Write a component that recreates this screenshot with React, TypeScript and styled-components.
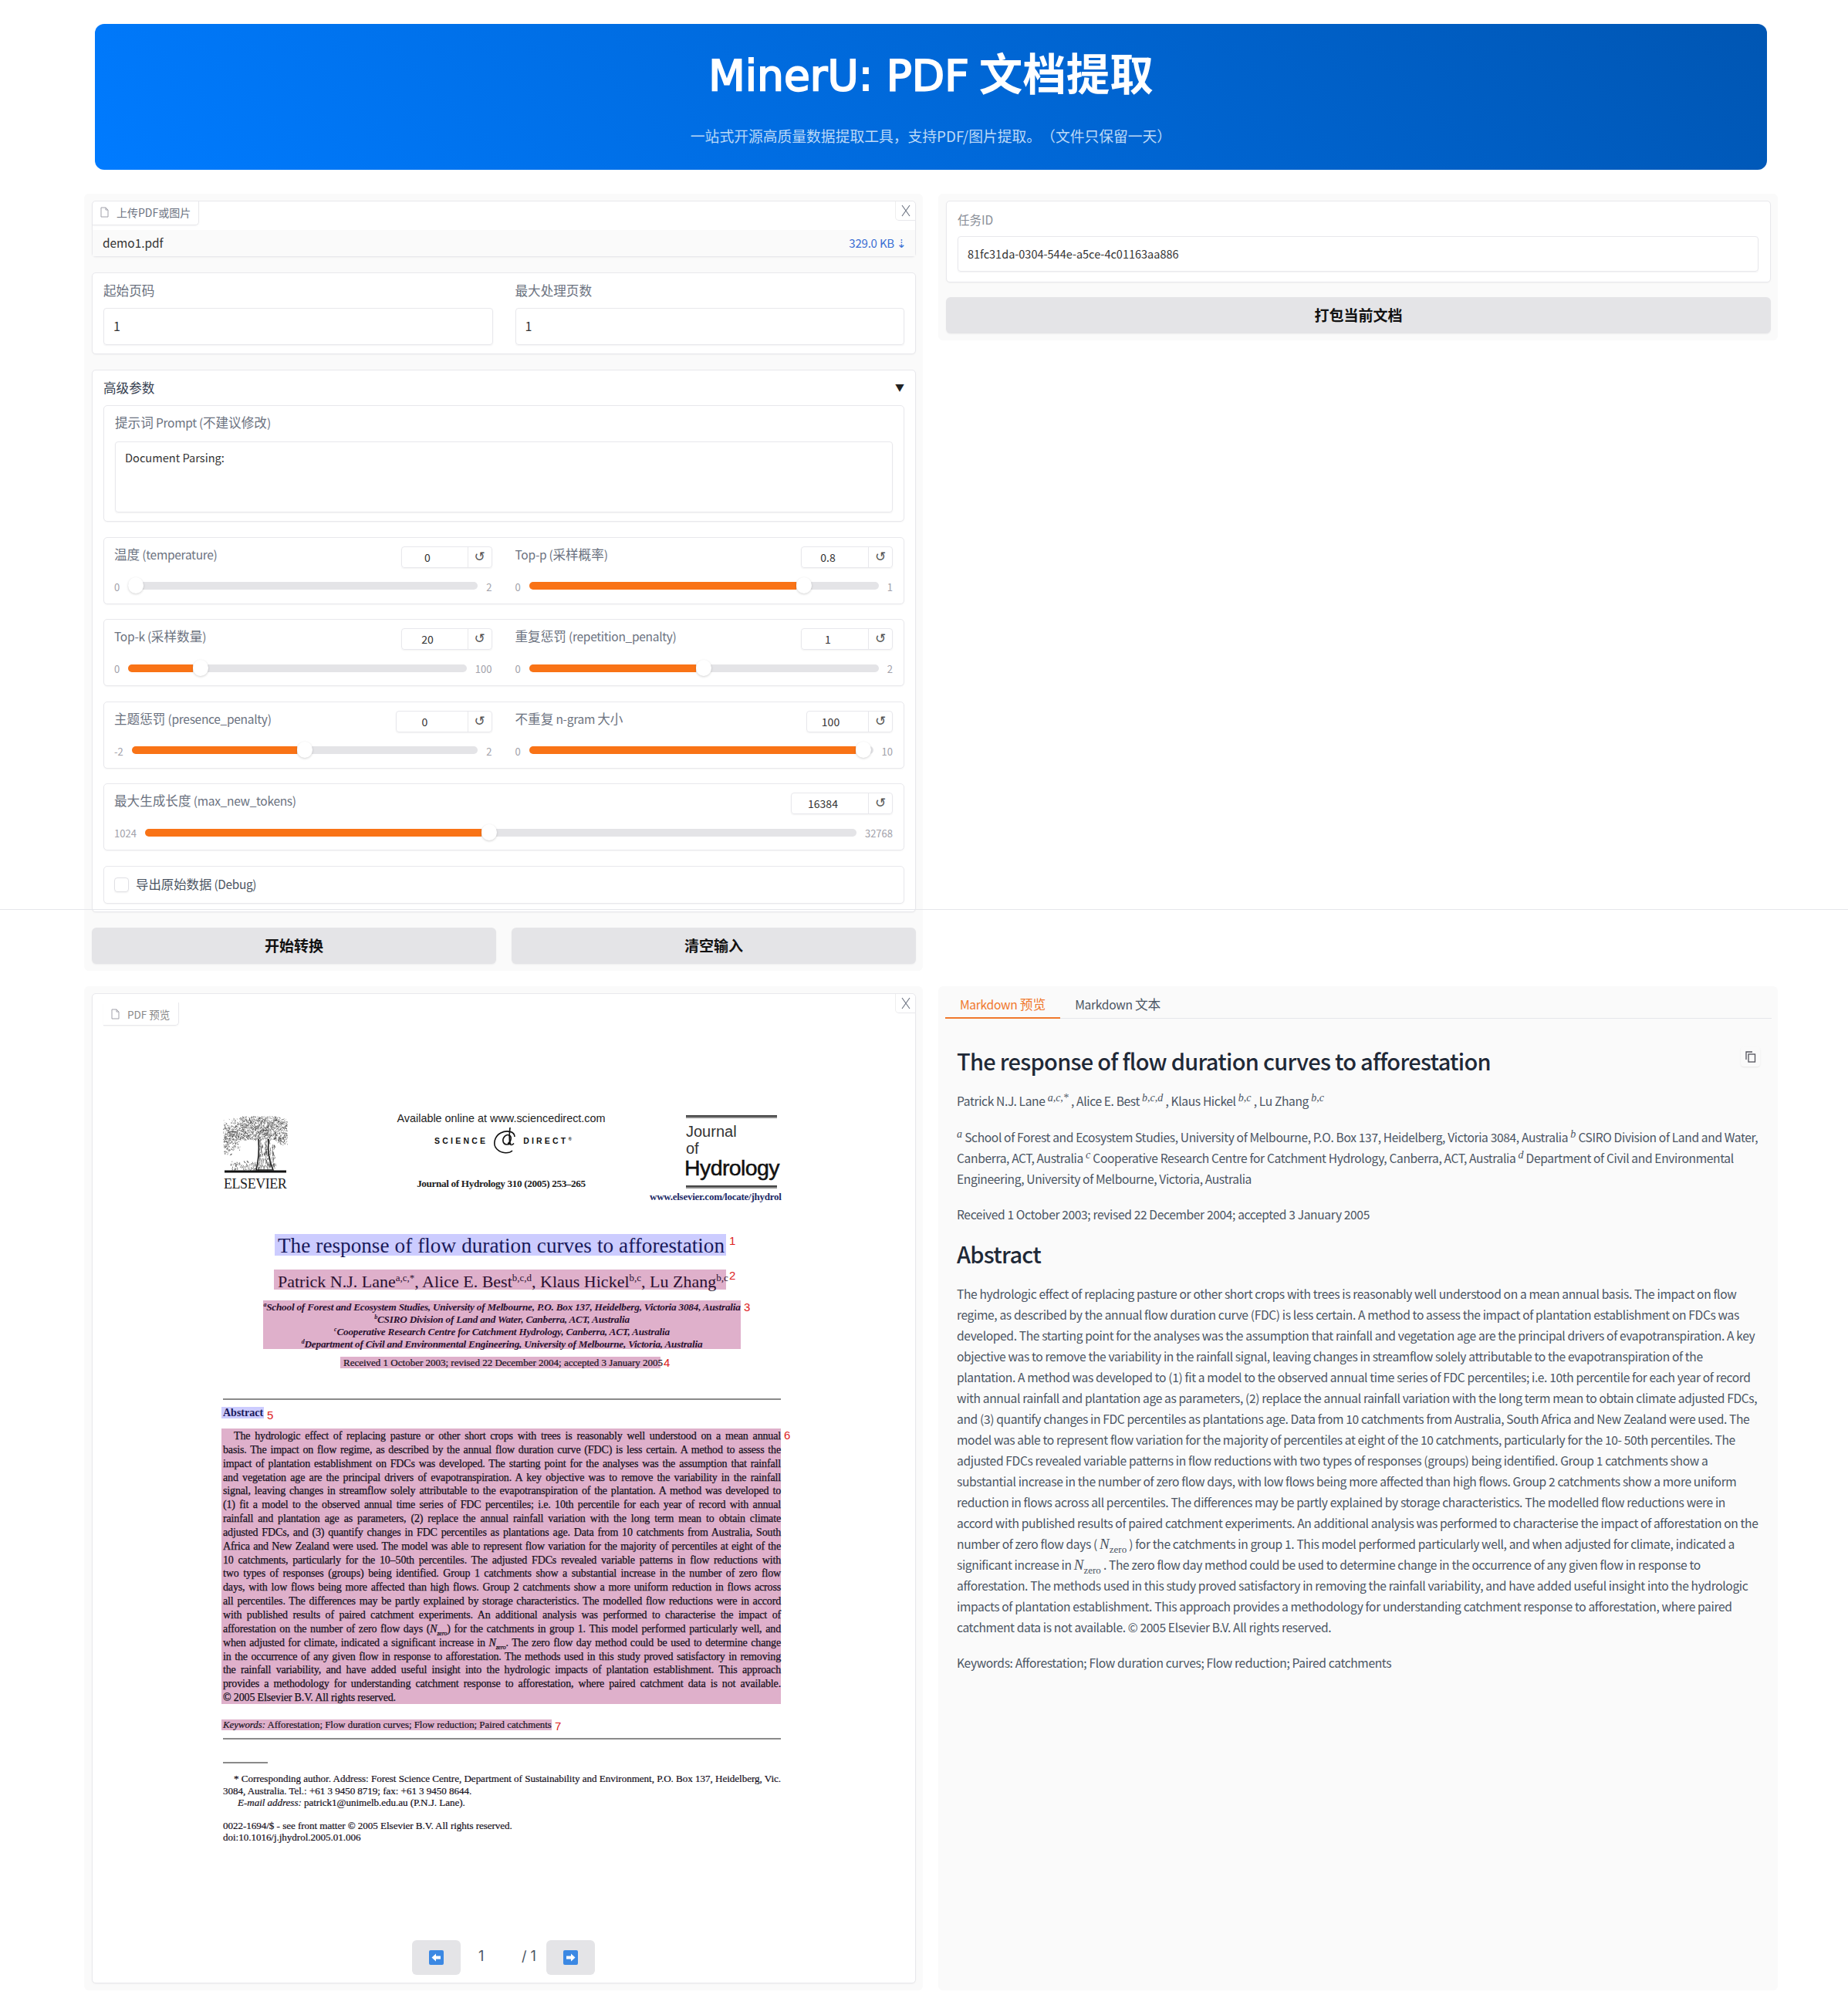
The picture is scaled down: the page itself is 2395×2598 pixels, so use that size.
import React from "react";
import styled, { createGlobalStyle } from "styled-components";

const SANS = `"Noto Sans CJK SC", "Noto Sans", sans-serif`;
const SERIF = `"Liberation Serif", "Times New Roman", serif`;

const GlobalStyle = createGlobalStyle`
    * {
        box-sizing: border-box;
    }
    html, body {
        margin: 0;
        padding: 0;
        background: #fff;
        font-family: ${SANS};
    }
`;

const sliderRows = [
    [
        {label: "温度 (temperature)", value: "0", min: "0", max: "2", pct: 0, boxWidth: 118},
        {label: "Top-p (采样概率)", value: "0.8", min: "0", max: "1", pct: 0.8, boxWidth: 119},
    ],
    [
        {label: "Top-k (采样数量)", value: "20", min: "0", max: "100", pct: 0.2, boxWidth: 118},
        {label: "重复惩罚 (repetition_penalty)", value: "1", min: "0", max: "2", pct: 0.5, boxWidth: 119},
    ],
    [
        {label: "主题惩罚 (presence_penalty)", value: "0", min: "-2", max: "2", pct: 0.5, boxWidth: 125},
        {label: "不重复 n-gram 大小", value: "100", min: "0", max: "10", pct: 0.995, boxWidth: 112},
    ],
];

const abstractLines = [
    "The hydrologic effect of replacing pasture or other short crops with trees is reasonably well understood on a mean annual",
    "basis. The impact on flow regime, as described by the annual flow duration curve (FDC) is less certain. A method to assess the",
    "impact of plantation establishment on FDCs was developed. The starting point for the analyses was the assumption that rainfall",
    "and vegetation age are the principal drivers of evapotranspiration. A key objective was to remove the variability in the rainfall",
    "signal, leaving changes in streamflow solely attributable to the evapotranspiration of the plantation. A method was developed to",
    "(1) fit a model to the observed annual time series of FDC percentiles; i.e. 10th percentile for each year of record with annual",
    "rainfall and plantation age as parameters, (2) replace the annual rainfall variation with the long term mean to obtain climate",
    "adjusted FDCs, and (3) quantify changes in FDC percentiles as plantations age. Data from 10 catchments from Australia, South",
    "Africa and New Zealand were used. The model was able to represent flow variation for the majority of percentiles at eight of the",
    "10 catchments, particularly for the 10–50th percentiles. The adjusted FDCs revealed variable patterns in flow reductions with",
    "two types of responses (groups) being identified. Group 1 catchments show a substantial increase in the number of zero flow",
    "days, with low flows being more affected than high flows. Group 2 catchments show a more uniform reduction in flows across",
    "all percentiles. The differences may be partly explained by storage characteristics. The modelled flow reductions were in accord",
    "with published results of paired catchment experiments. An additional analysis was performed to characterise the impact of",
];

const abstractLinesEnd = [
    "in the occurrence of any given flow in response to afforestation. The methods used in this study proved satisfactory in removing",
    "the rainfall variability, and have added useful insight into the hydrologic impacts of plantation establishment. This approach",
    "provides a methodology for understanding catchment response to afforestation, where paired catchment data is not available.",
];

// deterministic scribble for the engraved tree of the publisher logo
const treePath = () => {
    let seed = 7;
    const rnd = () => {
        seed = (seed * 16807) % 2147483647;
        return seed / 2147483647;
    };
    let d = "";
    for (let i = 0; i < 1500; i++) {
        const x = 1 + rnd() * 82;
        const y = 1 + rnd() * 30 + (Math.abs(x - 42) > 30 ? rnd() * 8 : 0) + (x < 22 ? rnd() * 14 : 0);
        d += `M${x.toFixed(1)} ${y.toFixed(1)}l${(rnd() * 4 - 2).toFixed(1)} ${(rnd() * 3 - 1).toFixed(1)}`;
    }
    for (let i = 0; i < 160; i++) {
        const x = 46 + rnd() * 22;
        const y = 30 + rnd() * 38;
        d += `M${x.toFixed(1)} ${y.toFixed(1)}l${(rnd() * 2 - 1).toFixed(1)} ${(rnd() * 6).toFixed(1)}`;
    }
    for (let i = 0; i < 90; i++) {
        const x = 10 + rnd() * 34;
        const y = 58 + rnd() * 12;
        d += `M${x.toFixed(1)} ${y.toFixed(1)}l${(rnd() * 3 - 1.5).toFixed(1)} ${(rnd() * 3).toFixed(1)}`;
    }
    return d;
};

// Latin runs of a mixed label sit a little smaller and tighter than the CJK ones
const Mixed = ({text}: { text: string }) => (
    <>
        {text.split(/([\x20-\x7e]+)/).map((run, i) =>
            /[\x20-\x7e]/.test(run) ? <LatinRun key={i}>{run}</LatinRun> : run
        )}
    </>
);

const FileIcon = () => (
    <svg width="11" height="14" viewBox="0 0 11 14" fill="none" stroke="#a1a1aa" strokeWidth="1">
        <path d="M1 1h6l3 3v9H1z"/>
        <path d="M7 1v3h3"/>
    </svg>
);

const CloseIcon = () => (
    <svg width="12" height="16" viewBox="0 0 12 16" fill="none" stroke="#6b7280" strokeWidth="1.1">
        <path d="M1 1l10 14M11 1L1 15"/>
    </svg>
);

const CopyIcon = () => (
    <svg width="14" height="15" viewBox="0 0 14 15" fill="none" stroke="#52525b" strokeWidth="1.3">
        <path d="M1 11V1h8"/>
        <rect x="4" y="4" width="8.5" height="10"/>
    </svg>
);

const ArrowIcon = ({dir}: { dir: "left" | "right" }) => (
    <svg width="19" height="19" viewBox="0 0 19 19">
        <rect width="19" height="19" rx="2" fill="#3b88e3"/>
        <path
            d={dir === "left" ? "M3.5 9.5L9 4.5v3h6v4H9v3z" : "M15.5 9.5L10 4.5v3H4v4h6v3z"}
            fill="#fff"
        />
    </svg>
);

const SdMark = () => (
    <SdMarkSvg width="34" height="35" viewBox="0 0 34 35" fill="none" stroke="#111" strokeWidth="1.6">
        <path d="M25 20c-2 3-9 3-10-2s4-10 8-8 2 9-2 11"/>
        <path d="M24 0c-1 8-1 16 0 21 .5 2 3 2 5-.5"/>
        <path d="M30 12C30 5 20 3 12 7S1 22 7 28s16 6 20 2"/>
    </SdMarkSvg>
);

const Slider = ({min, max, pct}: { min: string; max: string; pct: number }) => (
    <SliderLine>
        <RangeLabel>{min}</RangeLabel>
        <Track>
            <Fill style={{width: `calc(${pct} * (100% - 20px))`}}/>
            <Thumb style={{left: `calc(${pct} * (100% - 20px))`}}/>
        </Track>
        <RangeLabel>{max}</RangeLabel>
    </SliderLine>
);

const NumberField = ({value, width}: { value: string; width: number }) => (
    <NumberBox style={{width}}>
        <NumberValue>{value}</NumberValue>
        <ResetButton>↺</ResetButton>
    </NumberBox>
);

const Nzero = () => (
    <MathVar>N<sub>zero</sub></MathVar>
);

export default function App() {
    return (
        <Page>
            <GlobalStyle/>
            <PageSeam/>
            <Header>
                <Title><TitleLatin>MinerU: PDF</TitleLatin> 文档提取</Title>
                <Subtitle>一站式开源高质量数据提取工具，支持PDF/图片提取。（文件只保留一天）</Subtitle>
            </Header>

            <Row>
                <Panel>
                    <UploadBlock>
                        <BlockTab><FileIcon/>上传PDF或图片</BlockTab>
                        <CloseButton><CloseIcon/></CloseButton>
                        <FileRow>
                            <span>demo1.pdf</span>
                            <FileSize>329.0 KB ⇣</FileSize>
                        </FileRow>
                    </UploadBlock>

                    <PagesBlock>
                        <div>
                            <FieldLabel>起始页码</FieldLabel>
                            <TextField>1</TextField>
                        </div>
                        <div>
                            <FieldLabel>最大处理页数</FieldLabel>
                            <TextField>1</TextField>
                        </div>
                    </PagesBlock>

                    <Accordion>
                        <AccordionHead>
                            <span>高级参数</span>
                            <Caret>▼</Caret>
                        </AccordionHead>
                        <AccordionBody>
                            <PromptBlock>
                                <FieldLabel><Mixed text="提示词 Prompt (不建议修改)"/></FieldLabel>
                                <PromptArea>Document Parsing:</PromptArea>
                            </PromptBlock>

                            {sliderRows.map((row) => (
                                <SliderBlock key={row[0].label}>
                                    {row.map((s) => (
                                        <div key={s.label}>
                                            <SliderHead>
                                                <FieldLabel><Mixed text={s.label}/></FieldLabel>
                                                <NumberField value={s.value} width={s.boxWidth}/>
                                            </SliderHead>
                                            <Slider min={s.min} max={s.max} pct={s.pct}/>
                                        </div>
                                    ))}
                                </SliderBlock>
                            ))}

                            <WideSliderBlock>
                                <SliderHead>
                                    <FieldLabel><Mixed text="最大生成长度 (max_new_tokens)"/></FieldLabel>
                                    <NumberField value="16384" width={132}/>
                                </SliderHead>
                                <Slider min="1024" max="32768" pct={0.484}/>
                            </WideSliderBlock>

                            <CheckBlock>
                                <CheckBox/>
                                <CheckLabel><Mixed text="导出原始数据 (Debug)"/></CheckLabel>
                            </CheckBlock>
                        </AccordionBody>
                    </Accordion>

                    <ButtonRow>
                        <GrayButton>开始转换</GrayButton>
                        <GrayButton>清空输入</GrayButton>
                    </ButtonRow>
                </Panel>

                <Panel>
                    <TaskBlock>
                        <TaskLabel>任务ID</TaskLabel>
                        <TaskField>81fc31da-0304-544e-a5ce-4c01163aa886</TaskField>
                    </TaskBlock>
                    <GrayButton>打包当前文档</GrayButton>
                </Panel>
            </Row>

            <LowerRow>
                <Panel>
                    <PdfBlock>
                        <PdfTab><FileIcon/>PDF 预览</PdfTab>
                        <CloseButton><CloseIcon/></CloseButton>

                        <PdfPage>
                            <PdfHeader>
                                <PublisherLogo>
                                    <svg width="84" height="75" viewBox="0 0 84 75" fill="none">
                                        <path d={treePath()} stroke="#333" strokeWidth=".8" opacity=".7"/>
                                        <path d="M46 30c1 14 0 28-3 40h22c-5-10-7-26-6-40" stroke="#222" strokeWidth="1.6"/>
                                        <path d="M2 72h80" stroke="#111" strokeWidth="3"/>
                                    </svg>
                                    <PublisherName>ELSEVIER</PublisherName>
                                </PublisherLogo>
                                <SourceColumn>
                                    <AvailableLine>Available online at www.sciencedirect.com</AvailableLine>
                                    <SdLogo>SCIENCE<SdMark/>DIRECT<small>®</small></SdLogo>
                                    <JournalRef>Journal of Hydrology 310 (2005) 253–265</JournalRef>
                                </SourceColumn>
                                <JournalColumn>
                                    <JournalRule/>
                                    <JournalWord $top={6}>Journal</JournalWord>
                                    <JournalWord $top={0}>of</JournalWord>
                                    <JournalName>Hydrology</JournalName>
                                    <JournalRule $lower/>
                                    <JournalUrl>www.elsevier.com/locate/jhydrol</JournalUrl>
                                </JournalColumn>
                            </PdfHeader>

                            <PaperTitle>
                                <JustLine>The response of flow duration curves to afforestation</JustLine>
                                <BlockIndex $top={0}>1</BlockIndex>
                            </PaperTitle>
                            <PaperAuthors>
                                <JustLine>Patrick N.J. Lane<sup>a,c,*</sup>, Alice E. Best<sup>b,c,d</sup>, Klaus Hickel<sup>b,c</sup>, Lu Zhang<sup>b,c</sup></JustLine>
                                <BlockIndex $top={-1}>2</BlockIndex>
                            </PaperAuthors>
                            <PaperAffiliations>
                                <div><sup>a</sup>School of Forest and Ecosystem Studies, University of Melbourne, P.O. Box 137, Heidelberg, Victoria 3084, Australia</div>
                                <div><sup>b</sup>CSIRO Division of Land and Water, Canberra, ACT, Australia</div>
                                <div><sup>c</sup>Cooperative Research Centre for Catchment Hydrology, Canberra, ACT, Australia</div>
                                <div><sup>d</sup>Department of Civil and Environmental Engineering, University of Melbourne, Victoria, Australia</div>
                                <BlockIndex $top={0}>3</BlockIndex>
                            </PaperAffiliations>
                            <PaperReceived>
                                <JustLine>Received 1 October 2003; revised 22 December 2004; accepted 3 January 2005</JustLine>
                                <BlockIndex $top={-1}>4</BlockIndex>
                            </PaperReceived>

                            <PaperRule $marginTop={39}/>
                            <AbstractHead>Abstract<BlockIndex $top={2}>5</BlockIndex></AbstractHead>
                            <AbstractBody>
                                <BlockIndex $top={0}>6</BlockIndex>
                                {abstractLines.map((line, i) => (
                                    <AbstractLine key={line} $indent={i === 0}>{line}</AbstractLine>
                                ))}
                                <AbstractLine>afforestation on the number of zero flow days (<i>N<PdfSub>zero</PdfSub></i>) for the catchments in group 1. This model performed particularly well, and</AbstractLine>
                                <AbstractLine>when adjusted for climate, indicated a significant increase in <i>N<PdfSub>zero</PdfSub></i>. The zero flow day method could be used to determine change</AbstractLine>
                                {abstractLinesEnd.map((line) => (
                                    <AbstractLine key={line}>{line}</AbstractLine>
                                ))}
                                <AbstractLast>© 2005 Elsevier B.V. All rights reserved.</AbstractLast>
                            </AbstractBody>
                            <KeywordsLine>
                                <JustLine><i>Keywords:</i> Afforestation; Flow duration curves; Flow reduction; Paired catchments</JustLine>
                                <BlockIndex $top={0}>7</BlockIndex>
                            </KeywordsLine>
                            <PaperRule $marginTop={10}/>
                            <ShortRule/>
                            <Footnotes>
                                <AbstractLine $indent>* Corresponding author. Address: Forest Science Centre, Department of Sustainability and Environment, P.O. Box 137, Heidelberg, Vic.</AbstractLine>
                                <div>3084, Australia. Tel.: +61 3 9450 8719; fax: +61 3 9450 8644.</div>
                                <FootIndent><i>E-mail address:</i> patrick1@unimelb.edu.au (P.N.J. Lane).</FootIndent>
                            </Footnotes>
                            <Footnotes $marginTop={14}>
                                <div>0022-1694/$ - see front matter © 2005 Elsevier B.V. All rights reserved.</div>
                                <div>doi:10.1016/j.jhydrol.2005.01.006</div>
                            </Footnotes>
                        </PdfPage>

                        <PagerRow>
                            <PagerButton><ArrowIcon dir="left"/></PagerButton>
                            <PagerCurrent>1</PagerCurrent>
                            <PagerTotal>/ 1</PagerTotal>
                            <PagerButton><ArrowIcon dir="right"/></PagerButton>
                        </PagerRow>
                    </PdfBlock>
                </Panel>

                <MarkdownPanel>
                    <TabBar>
                        <TabItem $active><Mixed text="Markdown 预览"/></TabItem>
                        <TabItem><Mixed text="Markdown 文本"/></TabItem>
                    </TabBar>
                    <Prose>
                        <CopyButton><CopyIcon/></CopyButton>
                        <H1>The response of flow duration curves to afforestation</H1>
                        <P>Patrick N.J. Lane <MathSup>a,c,*</MathSup> , Alice E. Best <MathSup>b,c,d</MathSup> , Klaus Hickel <MathSup>b,c</MathSup> , Lu Zhang <MathSup>b,c</MathSup></P>
                        <AffiliationP><MathSup>a</MathSup> School of Forest and Ecosystem Studies, University of Melbourne, P.O. Box 137, Heidelberg, Victoria 3084, Australia <MathSup>b</MathSup> CSIRO Division of Land and Water, Canberra, ACT, Australia <MathSup>c</MathSup> Cooperative Research Centre for Catchment Hydrology, Canberra, ACT, Australia <MathSup>d</MathSup> Department of Civil and Environmental Engineering, University of Melbourne, Victoria, Australia</AffiliationP>
                        <P>Received 1 October 2003; revised 22 December 2004; accepted 3 January 2005</P>
                        <H2>Abstract</H2>
                        <P>The hydrologic effect of replacing pasture or other short crops with trees is reasonably well understood on a mean annual basis. The impact on flow regime, as described by the annual flow duration curve (FDC) is less certain. A method to assess the impact of plantation establishment on FDCs was developed. The starting point for the analyses was the assumption that rainfall and vegetation age are the principal drivers of evapotranspiration. A key objective was to remove the variability in the rainfall signal, leaving changes in streamflow solely attributable to the evapotranspiration of the plantation. A method was developed to (1) fit a model to the observed annual time series of FDC percentiles; i.e. 10th percentile for each year of record with annual rainfall and plantation age as parameters, (2) replace the annual rainfall variation with the long term mean to obtain climate adjusted FDCs, and (3) quantify changes in FDC percentiles as plantations age. Data from 10 catchments from Australia, South Africa and New Zealand were used. The model was able to represent flow variation for the majority of percentiles at eight of the 10 catchments, particularly for the 10- 50th percentiles. The adjusted FDCs revealed variable patterns in flow reductions with two types of responses (groups) being identified. Group 1 catchments show a substantial increase in the number of zero flow days, with low flows being more affected than high flows. Group 2 catchments show a more uniform reduction in flows across all percentiles. The differences may be partly explained by storage characteristics. The modelled flow reductions were in accord with published results of paired catchment experiments. An additional analysis was performed to characterise the impact of afforestation on the number of zero flow days ( <Nzero/> ) for the catchments in group 1. This model performed particularly well, and when adjusted for climate, indicated a significant increase in <Nzero/> . The zero flow day method could be used to determine change in the occurrence of any given flow in response to afforestation. The methods used in this study proved satisfactory in removing the rainfall variability, and have added useful insight into the hydrologic impacts of plantation establishment. This approach provides a methodology for understanding catchment response to afforestation, where paired catchment data is not available. © 2005 Elsevier B.V. All rights reserved.</P>
                        <P>Keywords: Afforestation; Flow duration curves; Flow reduction; Paired catchments</P>
                    </Prose>
                </MarkdownPanel>
            </LowerRow>
        </Page>
    );
}

const Page = styled.div`
    position: relative;
    width: 2395px;
    height: 2598px;
    padding: 31px 91px 19px 109px;
    overflow: hidden;
`;

const PageSeam = styled.div`
    position: absolute;
    top: 1178px;
    left: 0;
    right: 0;
    height: 1px;
    background: #e5e7eb;
    z-index: 2;
`;

const Header = styled.header`
    height: 189px;
    margin: 0 14px 31px;
    padding-top: 25px;
    border-radius: 12px;
    background: linear-gradient(45deg, #007bff, #0056b3);
    text-align: center;
    color: #fff;
`;

const Title = styled.h1`
    margin: 0;
    font-size: 56.5px;
    line-height: 72px;
    font-weight: 700;
    font-family: ${SANS};
`;

const TitleLatin = styled.span`
    font-family: "DejaVu Sans", sans-serif;
    font-size: 55px;
    font-weight: 400;
    -webkit-text-stroke: 2px #fff;
`;

const Subtitle = styled.p`
    margin: 28px 0 0;
    font-size: 18.8px;
    line-height: 28px;
    color: #bcd9f7;
    text-spacing-trim: space-all;
`;

const LatinRun = styled.span`
    font-size: 0.935em;
    letter-spacing: -0.3px;
`;

const Row = styled.div`
    display: grid;
    grid-template-columns: 1087px 1088px;
    gap: 20px;
    align-items: start;
`;

const LowerRow = styled(Row)`
    margin-top: 20px;
    height: 1301px;
    align-items: stretch;
`;

const Panel = styled.section`
    display: flex;
    flex-direction: column;
    gap: 20px;
    padding: 9px 9px 9px 10px;
    background: #fafafa;
    border-radius: 6px;
`;

const Block = styled.div`
    position: relative;
    background: #fff;
    border: 1px solid #e8e8ec;
    border-radius: 5px;
    box-shadow: 0 1px 2px rgba(0, 0, 0, .04);
`;

const UploadBlock = styled(Block)`
    height: 73px;
    padding-top: 37px;
`;

const BlockTab = styled.div`
    position: absolute;
    top: 0;
    left: 0;
    height: 31px;
    display: flex;
    align-items: center;
    gap: 10px;
    padding: 0 10px 2px;
    font-size: 14px;
    color: #6b7280;
    border-right: 1px solid #e8e8ec;
    border-bottom: 1px solid #e8e8ec;
    border-radius: 5px 0 5px 0;
    box-shadow: 0 1px 2px rgba(0, 0, 0, .04);
`;

const PdfTab = styled(BlockTab)`
    top: 11px;
    left: 14px;
    height: 30px;
    width: 98px;
    padding: 0 0 0 10px;
    color: #888;
    font-size: 13.5px;
    border-radius: 0 0 5px 0;
`;

const CloseButton = styled.div`
    position: absolute;
    top: 0;
    right: 0;
    width: 26px;
    height: 25px;
    display: flex;
    align-items: center;
    justify-content: center;
    border-left: 1px solid #eee;
    border-bottom: 1px solid #e8e8ec;
    border-radius: 0 5px 0 5px;
    background: #fff;
`;

const FileRow = styled.div`
    display: flex;
    justify-content: space-between;
    align-items: center;
    height: 34px;
    padding: 0 11px 2px 13px;
    background: #fafafa;
    font-size: 15.4px;
    color: #333;
`;

const FileSize = styled.span`
    font-size: 15px;
    letter-spacing: -.2px;
    color: #3b6fd4;
`;

const PagesBlock = styled(Block)`
    height: 106px;
    padding: 10px 14px 0 14px;
    display: grid;
    grid-template-columns: 1fr 1fr;
    gap: 29px;
`;

const FieldLabel = styled.div`
    font-size: 16.6px;
    line-height: 24px;
    color: #6b7280;
`;

const TextField = styled.div`
    height: 48px;
    margin-top: 11px;
    padding-left: 12px;
    border: 1px solid #e8e8ec;
    border-radius: 4px;
    box-shadow: 0 1px 2px rgba(0, 0, 0, .05);
    font-size: 16px;
    line-height: 44px;
    color: #333;
`;

const Accordion = styled(Block)`
    height: 703px;
    padding: 0 14px;
`;

const AccordionHead = styled.div`
    display: flex;
    justify-content: space-between;
    align-items: center;
    height: 45px;
    font-size: 16.6px;
    color: #374151;
    padding-bottom: 2px;
`;

const Caret = styled.span`
    font-size: 12px;
    color: #222;
`;

const AccordionBody = styled.div`
    display: flex;
    flex-direction: column;
    gap: 19.5px;
`;

const PromptBlock = styled(Block)`
    height: 151px;
    padding: 9px 14px 0;
`;

const PromptArea = styled.div`
    height: 92px;
    margin-top: 13px;
    padding: 8px 12px;
    border: 1px solid #e8e8ec;
    border-radius: 4px;
    box-shadow: 0 1px 2px rgba(0, 0, 0, .05);
    font-size: 14.6px;
    line-height: 24px;
    color: #333;
`;

const SliderBlock = styled(Block)`
    height: 87px;
    padding: 11px 14px 0 13px;
    display: grid;
    grid-template-columns: 1fr 1fr;
    gap: 30px;
`;

const WideSliderBlock = styled(Block)`
    height: 87px;
    padding: 11px 14px 0 13px;
`;

const SliderHead = styled.div`
    display: flex;
    justify-content: space-between;
    align-items: flex-start;

    ${FieldLabel} {
        margin-top: -2px;
    }
`;

const NumberBox = styled.div`
    display: flex;
    height: 28px;
    border: 1px solid #e8e8ec;
    border-radius: 4px;
    box-shadow: 0 1px 2px rgba(0, 0, 0, .05);
    font-size: 14px;
    color: #333;
`;

const NumberValue = styled.span`
    flex: 1;
    text-align: center;
    padding-right: 18px;
    line-height: 26px;
`;

const ResetButton = styled.span`
    width: 31px;
    flex: none;
    text-align: center;
    border-left: 1px solid #e8e8ec;
    line-height: 25px;
    color: #555;
    font-family: "DejaVu Sans", sans-serif;
    font-size: 17px;
`;

const SliderLine = styled.div`
    display: flex;
    align-items: center;
    gap: 11px;
    height: 21px;
    margin-top: 13px;
`;

const RangeLabel = styled.span`
    font-size: 13px;
    line-height: 16px;
    color: #a1a1aa;
    padding-top: 3px;
`;

const Track = styled.div`
    position: relative;
    flex: 1;
    height: 10px;
    background: #e4e4e7;
    border-radius: 5px;
`;

const Fill = styled.div`
    height: 10px;
    background: #f97316;
    border-radius: 5px 0 0 5px;
`;

const Thumb = styled.div`
    position: absolute;
    top: -6px;
    width: 20px;
    height: 21px;
    border-radius: 50%;
    background: #fff;
    box-shadow: 0 1px 3px rgba(0, 0, 0, .18);
`;

const CheckBlock = styled(Block)`
    height: 49px;
    padding: 0 13px;
    display: flex;
    align-items: center;
    gap: 9px;
`;

const CheckBox = styled.span`
    width: 19px;
    height: 19px;
    border: 1px solid #e0e0e4;
    border-radius: 4px;
    box-shadow: 0 1px 2px rgba(0, 0, 0, .05);
`;

const CheckLabel = styled.span`
    font-size: 16.4px;
    color: #4b5563;
    padding-bottom: 2px;
`;

const ButtonRow = styled.div`
    display: grid;
    grid-template-columns: 1fr 1fr;
    gap: 20px;
`;

const GrayButton = styled.div`
    height: 47px;
    border-radius: 6px;
    background: #e4e4e7;
    box-shadow: 0 1px 2px rgba(0, 0, 0, .05);
    text-align: center;
    font-size: 19px;
    font-weight: 700;
    line-height: 45px;
    color: #111;
`;

const TaskBlock = styled(Block)`
    height: 106px;
    margin-bottom: -1px;
    padding: 11px 15px 0 14px;
`;

const TaskLabel = styled.div`
    font-size: 15.5px;
    line-height: 24px;
    color: #8a8f98;
`;

const TaskField = styled.div`
    height: 46px;
    margin-top: 10px;
    padding-left: 12px;
    border: 1px solid #e8e8ec;
    border-radius: 4px;
    box-shadow: 0 1px 2px rgba(0, 0, 0, .05);
    font-size: 14.5px;
    line-height: 43px;
    color: #333;
`;

const PdfBlock = styled(Block)`
    flex: 1;
    display: flex;
    flex-direction: column;
    padding: 151px 0 10px;
`;

const PdfPage = styled.div`
    margin-left: 167px;
    width: 725px;
    font-family: ${SERIF};
    color: #16101c;
`;

const PdfHeader = styled.div`
    display: grid;
    grid-template-columns: 86px 1fr 170px;
    height: 120px;
    padding-left: 2px;
`;

const PublisherLogo = styled.div`
    padding-top: 7px;
`;

const PublisherName = styled.div`
    margin-top: -1px;
    line-height: 20px;
    font-size: 18px;
    letter-spacing: -.45px;
    white-space: nowrap;
    padding-left: 1px;
    color: #222;
`;

const SourceColumn = styled.div`
    padding-left: 82px;
    text-align: center;
`;

const AvailableLine = styled.div`
    font-family: "Liberation Sans", sans-serif;
    font-size: 14.4px;
    line-height: 20px;
    white-space: nowrap;
    color: #222;
`;

const SdLogo = styled.div`
    display: flex;
    align-items: center;
    justify-content: center;
    height: 34px;
    margin-top: 2px;
    padding-left: 5px;
    font-family: "Liberation Sans", sans-serif;
    font-size: 10.5px;
    font-weight: 700;
    letter-spacing: 3.2px;
    color: #111;

    small {
        font-size: 6px;
        letter-spacing: 0;
        margin-bottom: 4px;
    }
`;

const SdMarkSvg = styled.svg`
    flex: none;
    margin: 0 7px 0 5px;
`;

const JournalRef = styled.div`
    margin-top: 30px;
    font-size: 13.2px;
    line-height: 18px;
    font-weight: 700;
    letter-spacing: -.35px;
    white-space: nowrap;
    color: #222;
`;

const JournalColumn = styled.div`
    padding-top: 6px;
`;

const JournalRule = styled.div<{ $lower?: boolean }>`
    width: 118px;
    height: 4px;
    margin-left: 47px;
    margin-top: ${(p) => (p.$lower ? "9px" : "0")};
    background: #8a8a8a;
    border-top: 2px solid #444;
`;

const JournalWord = styled.div<{ $top: number }>`
    margin-left: 47px;
    margin-top: ${(p) => p.$top}px;
    font-family: "Liberation Sans", sans-serif;
    font-size: 20px;
    line-height: 22px;
    color: #333;
`;

const JournalName = styled.div`
    margin-left: 45px;
    font-family: "Liberation Sans", sans-serif;
    font-size: 28.5px;
    line-height: 28px;
    letter-spacing: -.6px;
    -webkit-text-stroke: .5px #111;
    color: #111;
`;

const JournalUrl = styled.div`
    margin-top: 3px;
    font-size: 13px;
    line-height: 16px;
    font-weight: 700;
    letter-spacing: -.25px;
    color: #1c2a66;
    white-space: nowrap;
`;

const Highlight = styled.div`
    position: relative;
`;

const JustLine = styled.div`
    text-align: justify;
    text-align-last: justify;
    white-space: nowrap;
`;

const BlockIndex = styled.span<{ $top: number }>`
    position: absolute;
    left: calc(100% + 4px);
    top: ${(p) => p.$top}px;
    font-family: "Liberation Sans", sans-serif;
    font-size: 15px;
    font-style: normal;
    font-weight: 400;
    line-height: 18px;
    letter-spacing: 0;
    color: #dd1c1c;
    -webkit-text-stroke: 0;
`;

const PaperTitle = styled(Highlight)`
    width: 585px;
    height: 28px;
    margin: 40px 0 0 69px;
    background: #ccccff;
    font-size: 27.2px;
    line-height: 31px;
    padding: 0 2px 0 4px;
    color: #1a1a5a;
`;

const PaperAuthors = styled(Highlight)`
    width: 586px;
    height: 26px;
    margin: 18px 0 0 68px;
    background: #dfb0cb;
    font-size: 22px;
    line-height: 31px;
    padding: 0 6px 0 5px;
    color: #2a1030;

    sup {
        font-size: 13px;
        line-height: 0;
    }
`;

const PaperAffiliations = styled(Highlight)`
    width: 619px;
    height: 63px;
    margin: 14px 0 0 54px;
    padding-top: 1px;
    background: #dfb0cb;
    font-size: 13.2px;
    font-style: italic;
    font-weight: 700;
    letter-spacing: -.2px;
    line-height: 16px;
    text-align: center;
    white-space: nowrap;
    color: #2a1030;

    sup {
        font-size: 8px;
        line-height: 0;
    }
`;

const PaperReceived = styled(Highlight)`
    width: 415px;
    height: 15px;
    margin: 10px 0 0 154px;
    background: #dfb0cb;
    font-size: 13px;
    line-height: 15px;
    padding: 0 1px 0 4px;
    -webkit-text-stroke: .2px #16101c;
`;

const PaperRule = styled.div<{ $marginTop: number }>`
    height: 2px;
    margin-top: ${(p) => p.$marginTop}px;
    margin-left: 2px;
    background: #8a8a8a;
`;

const AbstractHead = styled.div`
    position: relative;
    width: 55px;
    height: 15px;
    margin-top: 9px;
    background: #ccccff;
    font-size: 14px;
    font-weight: 700;
    line-height: 16px;
    padding-left: 2px;
    white-space: nowrap;
    color: #1a1a5a;
`;

const AbstractBody = styled.div`
    position: relative;
    height: 357px;
    margin-top: 13px;
    background: #dfb0cb;
    padding: 1px 0 0 2px;
    font-size: 14px;
    letter-spacing: -.15px;
    line-height: 17.85px;
    -webkit-text-stroke: .25px #16101c;
`;

const AbstractLine = styled.div<{ $indent?: boolean }>`
    text-align: justify;
    text-align-last: justify;
    white-space: nowrap;
    padding-left: ${(p) => (p.$indent ? "14px" : "0")};
`;

const AbstractLast = styled.div`
    white-space: nowrap;
`;

const PdfSub = styled.sub`
    font-size: 8px;
    line-height: 0;
`;

const KeywordsLine = styled(Highlight)`
    width: 428px;
    height: 14px;
    margin: 20px 0 0;
    background: #dfb0cb;
    font-size: 12.8px;
    line-height: 15px;
    padding-left: 2px;
    -webkit-text-stroke: .2px #16101c;

    ${JustLine} {
        text-align-last: left;
    }
`;

const ShortRule = styled.div`
    width: 58px;
    height: 2px;
    margin: 29px 0 0 2px;
    background: #8a8a8a;
`;

const Footnotes = styled.div<{ $marginTop?: number }>`
    margin-top: ${(p) => p.$marginTop ?? 12}px;
    padding-left: 2px;
    font-size: 13.1px;
    line-height: 15.5px;
    letter-spacing: -.05px;
    -webkit-text-stroke: .2px #16101c;
`;

const FootIndent = styled.div`
    padding-left: 19px;
`;

const PagerRow = styled.div`
    display: flex;
    align-items: center;
    margin: auto 0 0 414px;
    height: 45px;
`;

const PagerButton = styled.div`
    width: 63px;
    height: 45px;
    border-radius: 6px;
    background: #e4e4e7;
    display: flex;
    align-items: center;
    justify-content: center;
`;

const PagerCurrent = styled.span`
    width: 79px;
    padding: 0 0 5px 23px;
    font-family: "Inter", sans-serif;
    font-size: 18px;
    color: #4b5563;
`;

const PagerTotal = styled.span`
    width: 32px;
    padding-bottom: 5px;
    font-family: "Inter", sans-serif;
    font-size: 18px;
    color: #4b5563;
`;

const MarkdownPanel = styled.section`
    padding: 7px 8px 0 9px;
    background: #fafafa;
    border-radius: 6px;
`;

const TabBar = styled.nav`
    display: flex;
    height: 35px;
    border-bottom: 1px solid #e5e7eb;
`;

const TabItem = styled.div<{ $active?: boolean }>`
    height: 35px;
    padding: 0 19px;
    font-size: 16.7px;
    line-height: 32px;
    color: ${(p) => (p.$active ? "#f0782c" : "#4b5563")};
    border-bottom: 2px solid ${(p) => (p.$active ? "#f0782c" : "transparent")};
`;

const Prose = styled.div`
    position: relative;
    padding: 0 15px 0 15px;
    margin-top: 34px;
    font-size: 15.6px;
    letter-spacing: -.365px;
    line-height: 27px;
    color: #4b5563;
`;

const CopyButton = styled.div`
    position: absolute;
    top: 2px;
    right: 15px;
    width: 25px;
    height: 26px;
    display: flex;
    align-items: center;
    justify-content: center;
    box-shadow: 0 1px 2px rgba(0, 0, 0, .08);
    border-radius: 4px;
    background: #fafafa;
`;

const H1 = styled.h1`
    margin: 0;
    font-size: 29px;
    letter-spacing: -.72px;
    line-height: 40px;
    font-weight: 500;
    color: #1f2937;
`;

const H2 = styled(H1).attrs({as: "h2"})`
    margin-top: -2px;
`;

const P = styled.p`
    margin: 19px 0;
`;

const AffiliationP = styled(P)`
    margin-top: 20px;
`;

const MathSup = styled.sup`
    font-family: ${SERIF};
    font-style: italic;
    font-size: 14px;
    letter-spacing: 0;
    line-height: 0;
`;

const MathVar = styled.span`
    font-family: ${SERIF};
    font-style: italic;
    font-size: 19px;
    letter-spacing: 0;

    sub {
        font-style: normal;
        font-size: 13px;
        line-height: 0;
    }
`;
